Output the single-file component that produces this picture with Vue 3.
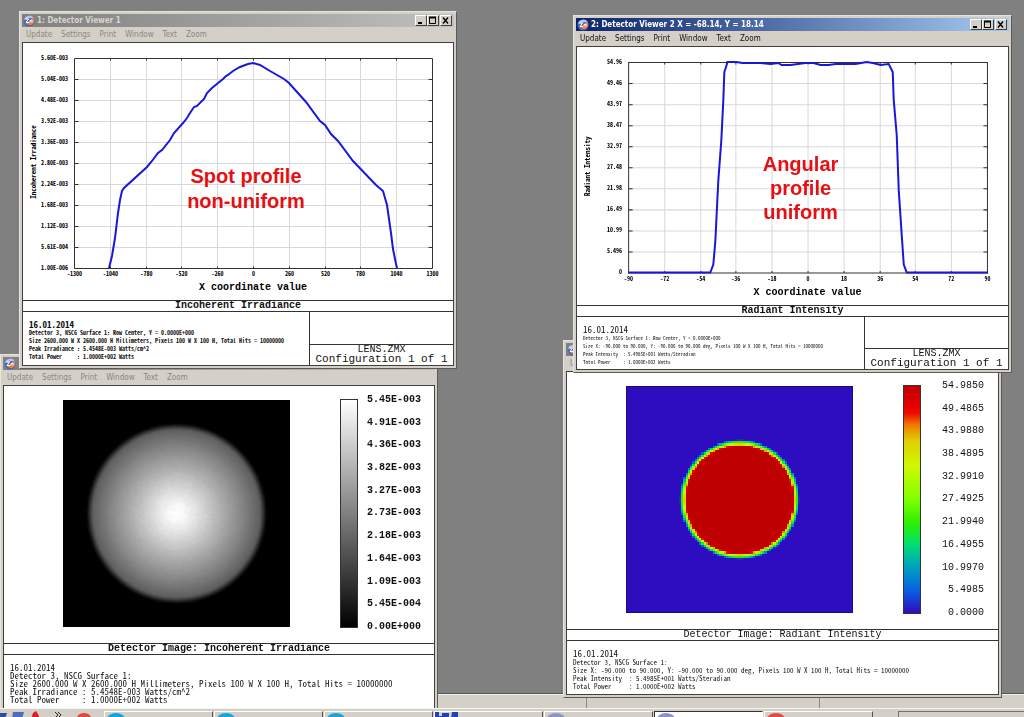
<script setup>
import { onMounted, ref } from 'vue'

const menu = ['Update', 'Settings', 'Print', 'Window', 'Text', 'Zoom']

const plot = { left: 52, top: 16, width: 358, height: 210 }
const steps = Array.from({ length: 11 }, (_, i) => i)
const gx = (i) => Math.round(plot.left + (plot.width / 10) * i) + 0.5
const gy = (i) => plot.top + 21 * i + 0.5

const windows = [
  {
    id: 'w3', kind: 'image', active: false, name: 'Detector Viewer 3', title: '', menu,
    caption: 'Detector Image: Incoherent Irradiance',
    scale: ['5.45E-003', '4.91E-003', '4.36E-003', '3.82E-003', '3.27E-003', '2.73E-003', '2.18E-003', '1.64E-003', '1.09E-003', '5.45E-004', '0.00E+000'],
    info: ['Detector 3, NSCG Surface 1:',
      'Size 2600.000 W X 2600.000 H Millimeters, Pixels 100 W X 100 H, Total Hits = 10000000',
      'Peak Irradiance : 5.4548E-003 Watts/cm^2',
      'Total Power     : 1.0000E+002 Watts'],
  },
  {
    id: 'w4', kind: 'image', active: false, name: 'Detector Viewer 4', title: '', menu: ['Update'],
    caption: 'Detector Image: Radiant Intensity',
    scale: ['54.9850', '49.4865', '43.9880', '38.4895', '32.9910', '27.4925', '21.9940', '16.4955', '10.9970', '5.4985', '0.0000'],
    info: ['Detector 3, NSCG Surface 1:',
      'Size X: -90.000 to 90.000, Y: -90.000 to 90.000 deg, Pixels 100 W X 100 H, Total Hits = 10000000',
      'Peak Intensity  : 5.4985E+001 Watts/Steradian',
      'Total Power     : 1.0000E+002 Watts'],
  },
  {
    id: 'w1', kind: 'plot', active: false, name: 'Detector Viewer 1', title: '1: Detector Viewer 1', menu,
    caption: 'Incoherent Irradiance',
    ylabel: 'Incoherent Irradiance',
    note: ['Spot profile', 'non-uniform'], noteX: 224, noteY: 141, notePitch: 25,
    y: ['5.60E-003', '5.04E-003', '4.48E-003', '3.92E-003', '3.36E-003', '2.80E-003', '2.24E-003', '1.68E-003', '1.12E-003', '5.61E-004', '1.00E-006'],
    x: ['-1300', '-1040', '-780', '-520', '-260', '0', '260', '520', '780', '1040', '1300'],
    line: '87,226 90,214 93,196 96,171 98,158 100,149 102,146 125,125 130,119 136,111 140,108 148,98 152,91 161,81 165,76 168,71 172,65 175,64 182,57 185,51 190,46 201,37 204,34 206,33 211,29 218,25 226,22 231,21 238,23 248,29 262,37 267,41 284,60 298,79 303,83 309,92 316,99 331,119 354,143 361,149 365,163 369,191 371,207 374,222 375,226',
    info: ['Detector 3, NSCG Surface 1: Row Center, Y = 0.0000E+000',
      'Size 2600.000 W X 2600.000 H Millimeters, Pixels 100 W X 100 H, Total Hits = 10000000',
      'Peak Irradiance : 5.4548E-003 Watts/cm^2',
      'Total Power     : 1.0000E+002 Watts'],
  },
  {
    id: 'w2', kind: 'plot', active: true, name: 'Detector Viewer 2', title: '2: Detector Viewer 2 X = -68.14, Y = 18.14', menu,
    caption: 'Radiant Intensity',
    ylabel: 'Radiant Intensity',
    note: ['Angular', 'profile', 'uniform'], noteX: 224, noteY: 125, notePitch: 24,
    y: ['54.96', '49.46', '43.97', '38.47', '32.97', '27.48', '21.98', '16.49', '10.99', '5.496', '0'],
    x: ['-90', '-72', '-54', '-36', '-18', '0', '18', '36', '54', '72', '90'],
    line: '52,226 134,226 137,218 139,195 141,154 142,134 145,94 147,54 148,26 150,20 151,16 160,16 166,17 184,17 194,18 202,17 205,19 214,19 229,17 237,17 244,19 252,19 259,18 279,18 290,16 296,17 304,19 312,18 316,26 317,54 320,89 322,144 325,189 327,218 330,226 411,226',
    info: ['Detector 3, NSCG Surface 1: Row Center, Y = 0.0000E+000',
      'Size X: -90.000 to 90.000, Y: -90.000 to 90.000 deg, Pixels 100 W X 100 H, Total Hits = 10000000',
      'Peak Intensity  : 5.4985E+001 Watts/Steradian',
      'Total Power     : 1.0000E+002 Watts'],
  },
]

const canvases = ref({})

function ramp(stops, v) {
  for (let i = 1; i < stops.length; i++) {
    const a = stops[i - 1]
    const b = stops[i]
    if (v <= b[0]) {
      const t = (v - a[0]) / (b[0] - a[0])
      return a.slice(1).map((c, k) => c + (b[k + 1] - c) * t)
    }
  }
  return stops[stops.length - 1].slice(1)
}

const rainbow = [
  [0, 46, 12, 192], [0.1, 10, 96, 225], [0.2, 0, 160, 195], [0.3, 0, 221, 112],
  [0.4, 48, 240, 0], [0.5, 128, 255, 0], [0.65, 208, 248, 0], [0.76, 226, 205, 0],
  [0.83, 240, 120, 0], [0.88, 238, 10, 0], [1, 190, 0, 0],
]
const gray = [[0, 0, 0, 0], [1, 255, 255, 255]]
const spot = [[0, 1], [0.1, 0.97], [0.25, 0.87], [0.5, 0.69], [0.75, 0.52], [0.95, 0.37], [1.02, 0], [9, 0]]

function draw(canvas, stops, field) {
  const ctx = canvas.getContext('2d')
  const img = ctx.createImageData(100, 100)
  let seed = 7
  for (let y = 0; y < 100; y++) {
    for (let x = 0; x < 100; x++) {
      seed = (seed * 16807) % 2147483647
      const noise = seed / 2147483647 - 0.5
      const v = field(Math.hypot(x - 49.5, y - 49.5), noise)
      const c = ramp(stops, Math.max(0, Math.min(1, v)))
      img.data.set([c[0], c[1], c[2], 255], (y * 100 + x) * 4)
    }
  }
  ctx.putImageData(img, 0, 0)
}

onMounted(() => {
  draw(canvases.value.w3, gray, (r, n) => {
    const v = ramp(spot, r / 38.9)[0]
    return v + n * 0.03 * v
  })
  draw(canvases.value.w4, rainbow, (r, n) => (26.6 - r) / 2.8 - (r < 23 ? 0.02 + n * 0.03 : 0))
})

const setCanvas = (id) => (el) => { if (el) canvases.value[id] = el }
</script>

<template>
  <main class="desktop">
    <section v-for="w in windows" :key="w.id" class="window" :class="[w.id, { active: w.active }]" :aria-label="w.name">
      <header class="titlebar">
        <svg class="logo" viewBox="0 0 12 12" aria-hidden="true">
          <circle cx="6" cy="6" r="5.5" fill="#4a68bc" />
          <path d="M1 5a5.200 5.200 0 0 1 10-1L8 3 4 4z" fill="#b9c6ea" />
          <path d="M3 8c2-2 2-1 4-2s2-3 4-2c1 4-2 6-4 6-2 0-3-1-4-2z" fill="#e8823c" />
          <path d="M2.500 4h3L3 7.500h3M7 7.500V5.500l2-.5v2.500" fill="none" stroke="#fff" />
        </svg>
        <h2>{{ w.title }}</h2>
        <div class="controls">
          <button type="button" aria-label="Minimize"><svg viewBox="0 0 10 9"><path d="M2 7h4" stroke="#000" stroke-width="2" /></svg></button>
          <button type="button" aria-label="Maximize"><svg viewBox="0 0 10 9"><path d="M1.500 1v6.500h6V1M1 1.500h7" stroke="#000" fill="none" /><path d="M1 1.500h7" stroke="#000" stroke-width="2" /></svg></button>
          <button type="button" class="close" aria-label="Close"><svg viewBox="0 0 10 9"><path d="M2 1.500l5 6M7 1.500l-5 6" stroke="#000" stroke-width="1.400" /></svg></button>
        </div>
      </header>
      <nav class="menu">
        <button v-for="m in w.menu" :key="m" type="button">{{ m }}</button>
      </nav>
      <div class="client">
        <svg v-if="w.kind === 'plot'" class="plot" viewBox="1 1 430 257" role="img" :aria-label="w.caption">
          <g class="grid">
            <path v-for="i in 9" :key="'v' + i" :d="`M${gx(i)} ${gy(0)}V${gy(10)}`" />
            <path v-for="i in 9" :key="'h' + i" :d="`M${gx(0)} ${gy(i)}H${gx(10)}`" />
          </g>
          <g class="axes">
            <path :d="`M${gx(0)} ${gy(0)}H${gx(10)}V${gy(10)}H${gx(0)}Z`" />
            <path v-for="i in 9" :key="'tx' + i" :d="`M${gx(i)} ${gy(0)}v2M${gx(i)} ${gy(10)}v-2`" />
            <path v-for="i in 9" :key="'ty' + i" :d="`M${gx(0)} ${gy(i)}h4M${gx(10)} ${gy(i)}h-4`" />
          </g>
          <polyline class="curve" :points="w.line" />
          <g class="tick">
            <text v-for="i in steps" :key="'ly' + i" :x="46" :y="gy(i) + 1" text-anchor="end">{{ w.y[i] }}</text>
            <text v-for="i in steps" :key="'lx' + i" :x="gx(i)" :y="234" text-anchor="middle">{{ w.x[i] }}</text>
          </g>
          <text class="vert" transform="translate(14 120) rotate(-90)" text-anchor="middle">{{ w.ylabel }}</text>
          <text class="axis" x="231" y="248" text-anchor="middle">X coordinate value</text>
          <g class="note">
            <text v-for="(t, i) in w.note" :key="t" :x="w.noteX" :y="w.noteY + w.notePitch * i" text-anchor="middle">{{ t }}</text>
          </g>
        </svg>
        <div v-else class="image">
          <canvas :ref="setCanvas(w.id)" class="map" width="100" height="100" />
          <div class="bar" />
          <ul class="scale">
            <li v-for="s in w.scale" :key="s">{{ s }}</li>
          </ul>
        </div>
        <h3>{{ w.caption }}</h3>
        <footer class="details">
          <div class="info">
            <p class="date">16.01.2014</p>
            <p v-for="line in w.info" :key="line">{{ line }}</p>
          </div>
          <div v-if="w.kind === 'plot'" class="file">
            <p class="lens-name">LENS.ZMX</p>
            <p class="config">Configuration 1 of 1</p>
          </div>
        </footer>
      </div>
    </section>

    <div class="status"><span /><span /><span /></div>
    <div class="taskbar">
      <div class="quick">
        <svg viewBox="0 0 104 8" aria-hidden="true">
          <path d="M0 2h7l-2 6H0z" fill="#2c4f9c" />
          <path d="M13 1h11l-2 7h-10z" fill="#4a6fb8" />
          <path d="M33 2l3-2 2 3 2 5h-9z" fill="#d8202c" />
          <path d="M55 1l3 3-3 3M58 1l3 3-3 3" fill="none" stroke="#222" />
          <ellipse cx="84" cy="7" rx="7" ry="5" fill="#dc4c40" />
        </svg>
      </div>
      <button v-for="(k, i) in ['cyan', 'cyan', 'cyan', 'disk', 'lens', 'lens', 'red']" :key="i" type="button" class="task" :class="{ pressed: i === 5 }" :aria-label="'Task ' + (i + 1)">
        <svg viewBox="0 0 26 7" aria-hidden="true">
          <path v-if="k === 'disk'" d="M0 0h4v4h3V1h7v6H0zM17 0h6v7h-7z" fill="#2142b4" />
          <ellipse v-else cx="11" cy="7" rx="9" ry="6" :class="k" />
        </svg>
      </button>
      <div class="tray" />
    </div>
  </main>
</template>

<style>
body {
  margin: 0;
  background: #808080;
}
</style>

<style scoped>
.desktop {
  position: relative;
  display: flex;
  flex-direction: column;
  justify-content: flex-end;
  height: 100vh;
  overflow: hidden;
  background: #808080;
  color: #111;
  font-family: "DejaVu Sans Condensed", "Liberation Sans", sans-serif;
}
h2, h3, p, ul {
  margin: 0;
  padding: 0;
  list-style: none;
}
button {
  font: inherit;
  color: inherit;
  margin: 0;
  padding: 0;
  border: 0;
  background: none;
}
.window {
  position: absolute;
  box-sizing: border-box;
  width: 438px;
  padding: 2px;
  border: 1px solid;
  border-color: #e6e4de #5c5a56 #5c5a56 #e6e4de;
  background: #d4d0c8;
}
.w1 { left: 19px; top: 11px; }
.w2 { left: 573px; top: 15px; width: 439px; }
.w3 { left: 0; top: 354px; }
.w4 { left: 563px; top: 340px; width: 439px; }
.titlebar {
  display: flex;
  align-items: center;
  height: 13px;
  padding: 0 2px 0 1px;
  background: linear-gradient(90deg, #808080, #c0c0c0);
  color: #d8d5ce;
}
.active .titlebar {
  background: linear-gradient(90deg, #0a246a, #a6caf0);
  color: #fff;
}
.logo {
  width: 12px;
  height: 12px;
  margin-right: 2px;
}
h2 {
  flex: 1;
  font-size: 8px;
  line-height: 13px;
  font-weight: bold;
}
.controls {
  display: flex;
}
.controls button {
  box-sizing: border-box;
  width: 12px;
  height: 11px;
  border: 1px solid;
  border-color: #fff #404040 #404040 #fff;
  background: #d4d0c8;
}
.controls .close {
  margin-left: 1px;
}
.controls svg {
  display: block;
  width: 10px;
  height: 9px;
}
.menu {
  display: flex;
  gap: 9px;
  height: 15px;
  padding-left: 4px;
  font-size: 8px;
  line-height: 15px;
  color: #8a877f;
}
.active .menu {
  color: #111;
}
.client {
  display: flex;
  flex-direction: column;
  box-sizing: border-box;
  min-height: 324px;
  border: 1px solid #404040;
  background: #fff;
}
.plot {
  display: block;
  width: 100%;
}
.grid path {
  stroke: #d8d8dc;
  fill: none;
}
.axes path {
  stroke: #333;
  fill: none;
}
.curve {
  fill: none;
  stroke: #1818dc;
  stroke-width: 2;
}
.tick, .vert, .info {
  font-family: "Noto Sans Mono CJK SC", "Liberation Mono", monospace;
}
.tick {
  font-size: 6px;
  font-weight: bold;
}
.vert {
  font-size: 7px;
  font-weight: bold;
}
.axis, h3, .scale, .file {
  font-family: "Liberation Mono", "DejaVu Sans Mono", monospace;
  font-size: 10px;
}
.axis, h3, .scale {
  font-weight: bold;
}
.w4 h3, .w4 .scale {
  font-weight: normal;
}
.note {
  font-family: "Liberation Sans", Arial, sans-serif;
  font-size: 20px;
  font-weight: bold;
  fill: #e60f12;
}
h3 {
  height: 10px;
  border: 1px solid #333;
  border-width: 1px 0;
  line-height: 9px;
  text-align: center;
}
.details {
  display: flex;
  flex: 1;
  justify-content: space-between;
}
.info {
  padding: 8px 0 0 6px;
  font-size: 9px;
  line-height: 8px;
  white-space: pre;
}
.info .date {
  font-size: 9px;
  line-height: 9px;
}
.w1 .info { font-size: 6px; font-weight: bold; }
.w2 .info { font-size: 5px; }
.w4 .info { font-size: 7px; }
.file {
  display: flex;
  flex-direction: column;
  justify-content: flex-end;
  width: 143px;
  border-left: 1px solid #333;
  text-align: center;
  line-height: 9px;
}
.lens-name {
  border-top: 1px solid #333;
}
.config {
  font-size: 11px;
  line-height: 11px;
}
.image {
  display: flex;
  height: 257px;
  box-sizing: border-box;
  padding: 13px 0 0 59px;
}
.map {
  width: 227px;
  height: 227px;
  margin-top: 1px;
  image-rendering: pixelated;
}
.w3 .map {
  image-rendering: auto;
}
.w4 .map {
  box-sizing: border-box;
  border: 1px solid #1c0c70;
}
.bar {
  box-sizing: border-box;
  width: 18px;
  height: 229px;
  margin-left: 50px;
  border: 1px solid #333;
  background: linear-gradient(#fff, #000);
}
.w4 .bar {
  background: linear-gradient(0deg, #2e0cc0, #0a60e1 10%, #00a0c3 20%, #00dd70 30%, #30f000 40%, #80ff00 50%, #d0f800 65%, #e2cd00 76%, #f07800 83%, #ee0a00 88%, #e80000 91%, #be0000);
}
.scale {
  display: flex;
  flex-direction: column;
  justify-content: space-between;
  height: 237px;
  margin: -4px 0 0 9px;
  text-align: right;
  line-height: 10px;
}
.w4 .scale {
  margin-left: 21px;
}
.status {
  display: flex;
  height: 14px;
  border-top: 1px solid #555;
  box-shadow: inset 0 1px #f4f2ee;
  background: #d4d0c8;
}
.status span:nth-child(1) {
  width: 586px;
}
.status span:nth-child(2) {
  width: 232px;
  border: solid #8c8880;
  border-width: 0 1px;
}
.taskbar {
  position: relative;
  display: flex;
  gap: 1px;
  box-sizing: border-box;
  height: 9px;
  padding-top: 2px;
  border-top: 1px solid #f6f4f0;
  background: #d4d0c8;
}
.quick {
  width: 103px;
}
.quick svg {
  display: block;
  width: 104px;
  height: 8px;
}
.task {
  flex: 0 0 109px;
  box-sizing: border-box;
  border: solid;
  border-width: 1px 1px 0;
  border-color: #fff #55524c #fff #fff;
  text-align: left;
}
.task svg {
  display: block;
  width: 26px;
  height: 7px;
}
.pressed {
  border-color: #333 #fff #fff #333;
  background: #fff;
}
.cyan { fill: #12a5e0; }
.lens { fill: #8f93c8; }
.red { fill: #dc4c40; }
.tray {
  flex: 1;
  margin-left: 24px;
  border: solid #77736c;
  border-width: 1px 0 0 1px;
}
</style>
